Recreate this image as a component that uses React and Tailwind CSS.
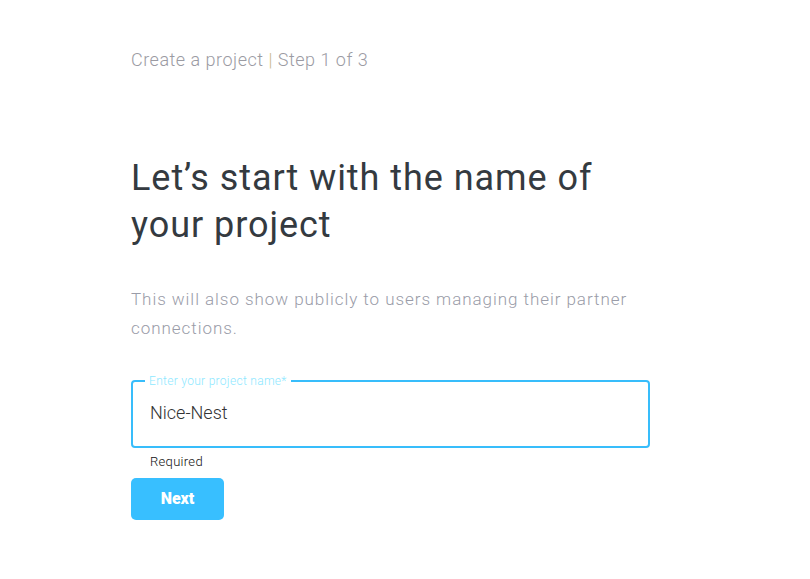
import React, { useState } from 'react';

const App = () => {
  const [name, setName] = useState('Nice-Nest');

  return (
    <div className="min-h-screen w-full bg-white font-['Roboto',sans-serif]">
      <div className="pl-[131px] pt-[47px] w-[650px]">
        <p className="text-[18px] leading-[26px] font-light tracking-[0.5px] text-[#9b9ba3]">
          Create a project <span className="text-[#c9b98a]">|</span> Step 1 of 3
        </p>

        <h1 className="mt-[82px] text-[36px] leading-[47px] text-[#343a40] tracking-[0.95px]">
          Let’s start with the name of your project
        </h1>

        <p className="mt-[36px] text-[17px] leading-[29px] font-light tracking-[0.95px] text-[#9a9ca8]">
          This will also show publicly to users managing their partner connections.
        </p>

        <fieldset className="mt-[32px] w-[519px] h-[73px] border-2 border-[#38bdfb] rounded-[4px] px-[17px] pb-[8px]">
          <legend className="px-[4px] ml-[-5px] text-[12px] leading-[12px] font-light tracking-[0.3px] text-[#8ee8ff]">
            Enter your project name*
          </legend>
          <input
            value={name}
            onChange={e => setName(e.target.value)}
            className="w-full mt-[14px] bg-transparent outline-none text-[18px] leading-[24px] font-light text-[#333]"
          />
        </fieldset>

        <p className="mt-[6px] pl-[19px] text-[13px] leading-[16px] tracking-[0.3px] font-light text-[#111]">Required</p>

        <button className="mt-[8px] w-[93px] h-[42px] rounded-[5px] bg-[#38bfff] text-white text-[16px] font-black">
          Next
        </button>
      </div>
    </div>
  );
};

export default App;
